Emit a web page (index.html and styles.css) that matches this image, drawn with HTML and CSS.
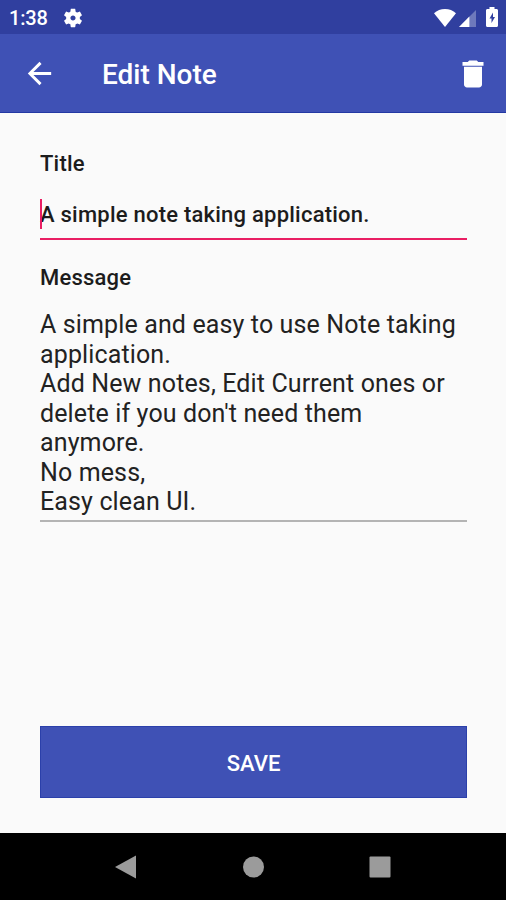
FILE: index.html
```html
<!DOCTYPE html>
<html lang="en">

<head>
	<meta charset="UTF-8">
	<meta name="viewport" content="width=device-width, initial-scale=1.0">
	<title>Edit Note</title>

	<link rel="stylesheet" href="styles.css">
</head>

<body>

	<div class="main">

		<div class="status">
			<span class="time">1:38</span>
			<svg class="gear" viewBox="0 0 24 24"><path d="M19.43 12.98c.04-.32.07-.64.07-.98s-.03-.66-.07-.98l2.11-1.65c.19-.15.24-.42.12-.64l-2-3.46c-.12-.22-.39-.3-.61-.22l-2.49 1c-.52-.4-1.08-.73-1.69-.98l-.38-2.65C14.46 2.18 14.25 2 14 2h-4c-.25 0-.46.18-.49.42l-.38 2.65c-.61.25-1.17.59-1.69.98l-2.49-1c-.23-.09-.49 0-.61.22l-2 3.46c-.13.22-.07.49.12.64l2.11 1.65c-.04.32-.07.65-.07.98s.03.66.07.98l-2.11 1.65c-.19.15-.24.42-.12.64l2 3.46c.12.22.39.3.61.22l2.49-1c.52.4 1.08.73 1.69.98l.38 2.65c.03.24.24.42.49.42h4c.25 0 .46-.18.49-.42l.38-2.65c.61-.25 1.17-.59 1.69-.98l2.49 1c.23.09.49 0 .61-.22l2-3.46c.12-.22.07-.49-.12-.64l-2.11-1.65zM12 14.800c-1.550 0-2.800-1.250-2.800-2.800s1.250-2.800 2.800-2.800 2.800 1.250 2.800 2.800-1.250 2.800-2.800 2.800z"/></svg>
			<svg class="wifi" viewBox="0 0 22 18"><path d="M11 18L0 4.200C3 1.600 6.800 0 11 0s8 1.600 11 4.200z"/></svg>
			<svg class="signal" viewBox="0 0 18 18"><path class="dim" d="M18 0v18H0z"/><path d="M11 7v11H0z"/></svg>
			<svg class="battery" viewBox="0 0 12 20"><path fill-rule="evenodd" d="M3.500 0h5v2h2c.9 0 1.500.6 1.500 1.500v15c0 .9-.6 1.500-1.500 1.500h-9C.6 20 0 19.400 0 18.500v-15C0 2.600.6 2 1.500 2h2zM7 5.500l-3.500 6h2V16l3.500-6H7z"/></svg>
		</div>

		<div class="toolbar">
			<svg class="back" viewBox="0 0 24 24"><path d="M20 11H7.830l5.590-5.590L12 4l-8 8 8 8 1.410-1.410L7.830 13H20v-2z"/></svg>
			<h1>Edit Note</h1>
			<svg class="delete" viewBox="0 0 24 24"><path d="M6 19c0 1.100.9 2 2 2h8c1.100 0 2-.9 2-2V7.200H6v12zM19 4h-3.500l-1-1h-5l-1 1H5v2.500h14V4z"/></svg>
		</div>

		<div class="content">
			<h4>Title</h4>
			<div class="title"><span class="cursor"></span>A simple note taking application.</div>

			<h4>Message</h4>
			<div class="message">A simple and easy to use Note taking application.<br>Add New notes, Edit Current ones or delete if you don't need them anymore.<br>No mess,<br>Easy clean UI.</div>

			<button>SAVE</button>
		</div>

		<div class="nav">
			<svg viewBox="0 0 24 24"><path d="M1 12L22 .5v23z"/></svg>
			<svg viewBox="0 0 24 24"><circle cx="12.500" cy="12" r="10.500"/></svg>
			<svg viewBox="0 0 24 24"><rect x="1.500" y="1.500" width="21" height="21" rx="1"/></svg>
		</div>

	</div>

</body>

</html>
```
FILE: styles.css
```css
* {
	font-family: Roboto, sans-serif;
	box-sizing: border-box;
}

body {
	margin: 0;
}

svg {
	display: block;
	flex: none;
	fill: #fff;
}

.main {
	display: flex;
	flex-direction: column;
	width: 506px;
	height: 900px;
	background: #fafafa;
}

.status {
	display: flex;
	align-items: center;
	height: 34px;
	padding: 1px 8px 0 9px;
	background: #303f9f;
	color: #fff;
}

.time {
	width: 53px;
	font-size: 20px;
	font-weight: 500;
	letter-spacing: -0.2px;
}

.gear {
	width: 22px;
	height: 22px;
}

.wifi {
	width: 22px;
	height: 18px;
	margin-left: auto;
}

.signal {
	width: 17px;
	height: 17px;
	margin: 1px 10px 0 3px;
}

.dim {
	opacity: 0.3;
}

.battery {
	width: 12px;
	height: 20px;
	margin-bottom: 1px;
}

.toolbar {
	display: flex;
	align-items: center;
	height: 79px;
	padding: 1px 15px 0 22px;
	background: #3f51b5;
	border-bottom: 1px solid #2338a3;
	color: #fff;
}

.back {
	width: 35px;
	height: 35px;
}

h1 {
	margin: 1px auto 0 45px;
	font-size: 28px;
	font-weight: 500;
}

.delete {
	width: 36px;
	height: 36px;
}

.content {
	display: flex;
	flex-direction: column;
	flex: 1;
	padding: 37px 39px 35px 40px;
}

h4 {
	margin: 0;
	font-size: 22px;
	font-weight: 500;
	line-height: 28px;
	letter-spacing: 0.2px;
	color: #1c1c1c;
}

.title {
	position: relative;
	height: 51px;
	margin: 11px 0 24px;
	padding-top: 12px;
	border-bottom: 2px solid #e91e63;
	font-size: 22px;
	font-weight: 500;
	line-height: 28px;
	letter-spacing: 0.23px;
	color: #1c1c1c;
}

/* text caret over the first letter */
.cursor {
	position: absolute;
	left: 0;
	top: 10px;
	width: 2px;
	height: 30px;
	background: #e91e63;
}

.message {
	height: 230px;
	padding-top: 18px;
	border-bottom: 2px solid #b4b4b4;
	font-size: 25px;
	line-height: 29.5px;
	letter-spacing: 0.13px;
	color: #222;
}

button {
	height: 72px;
	margin-top: auto;
	padding: 2px 0 0;
	background: #3f51b5;
	border: 1px solid #2b40aa;
	font-size: 22px;
	font-weight: 500;
	color: #fff;
}

.nav {
	display: flex;
	align-items: center;
	justify-content: center;
	gap: 103px;
	height: 67px;
	background: #000;
}

.nav svg {
	width: 24px;
	height: 24px;
	fill: #9b9b9b;
}
```
